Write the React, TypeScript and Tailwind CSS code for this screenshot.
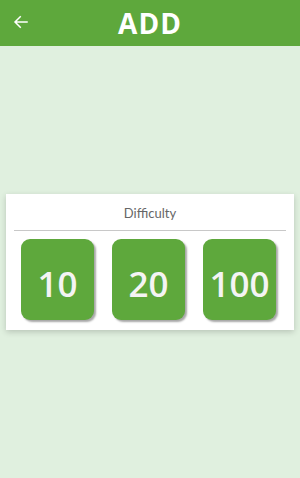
import React from 'react';

const levels = [10, 20, 100];

export default function App() {
  return (
    <div className="w-[300px] h-[478px] bg-[#e0f0df] flex flex-col" style={{ fontFamily: 'Lato, "Open Sans", sans-serif' }}>
      {/* Header */}
      <div className="h-[46px] bg-[#5ea83c] relative flex items-center justify-center shrink-0">
        <button className="absolute left-[12px] top-[13px] text-white">
          <svg width="18" height="18" viewBox="0 0 24 24" fill="none" stroke="white" strokeWidth="2" strokeLinecap="square">
            <path d="M20 12H5M11 5l-7 7 7 7" />
          </svg>
        </button>
        <h1 className="text-white font-bold text-[28px] tracking-[1px] leading-none" style={{ fontFamily: '"Open Sans", sans-serif' }}>ADD</h1>
      </div>

      {/* Card */}
      <div className="mt-[148px] mx-[6px] bg-white shadow-[0_2px_6px_rgba(0,0,0,0.18)] px-[8px] pt-[10px] pb-[10px]">
        <div className="text-center text-[13px] text-[#666] pb-[6px] border-b border-[#c8c8c8]">Difficulty</div>
        <div className="flex gap-[18px] pl-[7px] mt-[8px]">
          {levels.map((n) => (
            <button
              key={n}
              className="w-[73px] h-[81px] bg-[#5ea83c] rounded-[9px] shadow-[2px_2px_2px_rgba(0,0,0,0.35)] flex items-center justify-center pt-[8px] text-[#f4f4f4] text-[35px] font-semibold leading-none"
              style={{ fontFamily: '"Open Sans", sans-serif' }}
            >
              {n}
            </button>
          ))}
        </div>
      </div>
    </div>
  );
}
